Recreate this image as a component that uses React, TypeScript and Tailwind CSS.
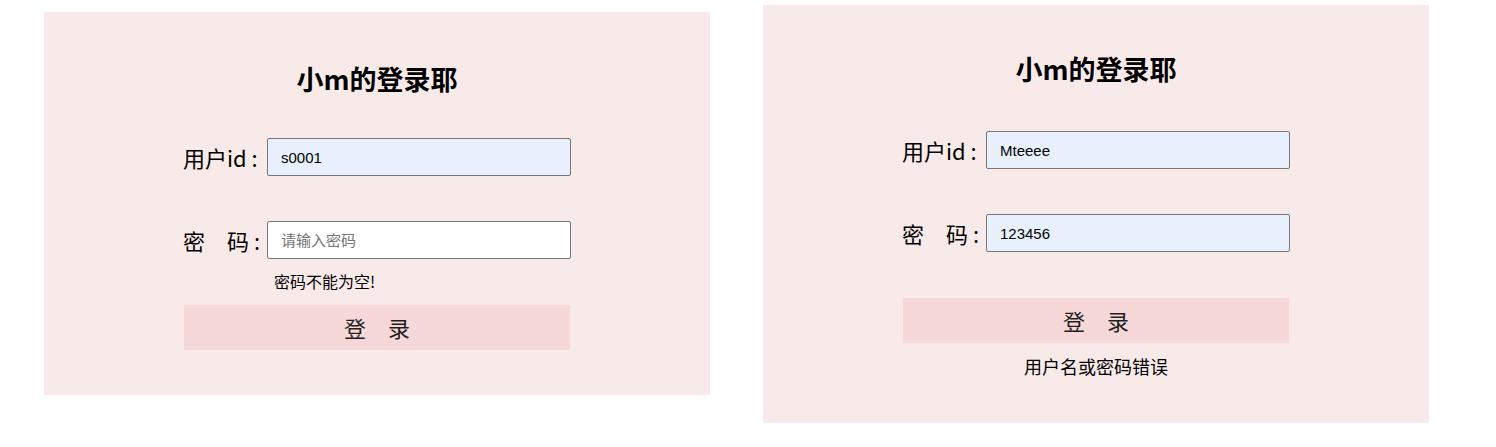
import React from "react";

const CJK = "font-['Noto_Sans_CJK_SC',sans-serif]";
const INPUT_FONT = "font-['Liberation_Sans','Noto_Sans_CJK_SC',sans-serif]";

type Field = { label: string; value: string; placeholder?: string; filled: boolean };

function Row({ label, value, placeholder, filled }: Field) {
    return (
        <div className="flex items-center h-[38px]">
            <span className={`w-[84px] shrink-0 whitespace-pre text-[22px] leading-[30px] text-black ${CJK}`}>
                {label}
            </span>
            <input
                readOnly
                defaultValue={value}
                placeholder={placeholder}
                className={`w-[304px] h-[38px] pl-[13px] border border-[#767676] rounded-[2px] text-[15px] text-black placeholder:text-[#757575] outline-none ${INPUT_FONT} ${
                    filled ? "bg-[#e8f0fe]" : "bg-white"
                }`}
            />
        </div>
    );
}

function LoginCard({
    titleTop,
    user,
    pass,
    hint,
    message,
    className,
}: {
    titleTop: string;
    user: Field;
    pass: Field;
    hint?: string;
    message?: string;
    className: string;
}) {
    return (
        <div className={`w-[666px] shrink-0 bg-[#f9eaea] pb-[45px] ${className}`}>
            {/* header */}
            <div className={`h-[126px] ${titleTop}`}>
                <h2 className={`text-center text-[27px] leading-[32px] font-bold text-black ${CJK}`}>小m的登录耶</h2>
            </div>

            <div className="ml-[139px] w-[388px]">
                <Row {...user} />
                <div className="mt-[45px]">
                    <Row {...pass} />
                </div>

                {/* inline hint slot keeps the button in place */}
                <div className="h-[46px] pt-[10px]">
                    {hint && (
                        <p className={`ml-[91px] text-[16px] leading-[24px] text-black ${CJK}`}>{hint}</p>
                    )}
                </div>

                <button
                    className={`ml-[1px] w-[386px] h-[45px] bg-[#f6d8d9] text-[22px] text-[#1f1f1f] whitespace-pre ${CJK}`}
                >
                    登　录
                </button>

                {message && (
                    <p className={`mt-[11px] h-[24px] text-center text-[18px] leading-[24px] text-black ${CJK}`}>
                        {message}
                    </p>
                )}
            </div>
        </div>
    );
}

export default function App() {
    return (
        <div className="min-h-screen bg-white">
            <div className="flex items-start gap-[53px] pl-[44px]">
                <LoginCard
                    className="mt-[12px]"
                    titleTop="pt-[51px]"
                    user={{ label: "用户id :", value: "s0001", filled: true }}
                    pass={{ label: "密　码 :", value: "", placeholder: "请输入密码", filled: false }}
                    hint="密码不能为空!"
                />
                <LoginCard
                    className="mt-[5px]"
                    titleTop="pt-[48px]"
                    user={{ label: "用户id :", value: "Mteeee", filled: true }}
                    pass={{ label: "密　码 :", value: "123456", filled: true }}
                    message="用户名或密码错误"
                />
            </div>
        </div>
    );
}
